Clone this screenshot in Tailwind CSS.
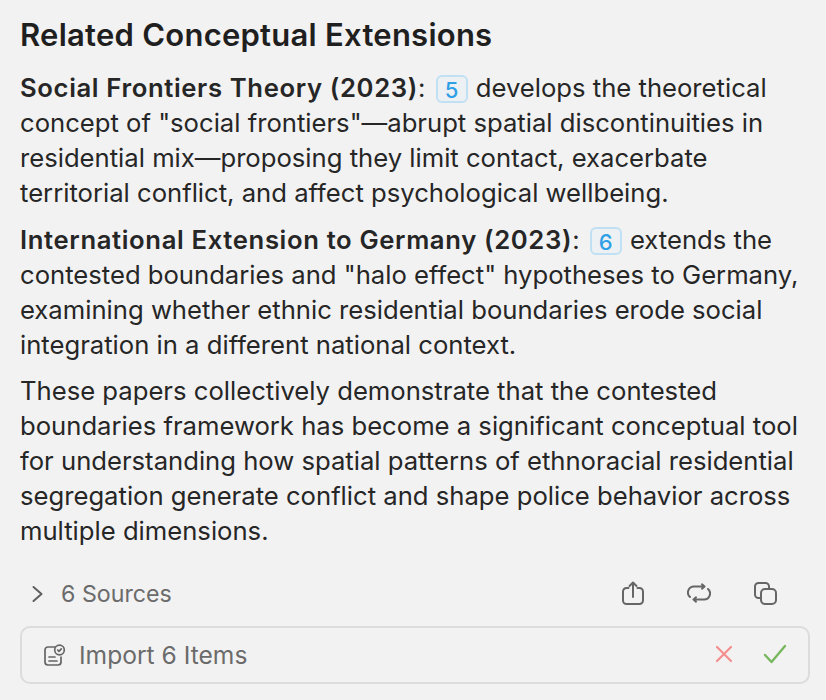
<!DOCTYPE html>
<html lang="en">
<head>
  <meta charset="UTF-8" />
  <title>Related Conceptual Extensions</title>
  <script src="https://cdn.jsdelivr.net/npm/@tailwindcss/browser@4"></script>
</head>
<body class="bg-[#f2f2f2] h-[700px] overflow-hidden font-['Inter',sans-serif] text-[#262626]">
  <div class="pl-[20px] pr-4 pt-[16px]">
    <h1 class="text-[31px] leading-[38px] font-semibold tracking-[0.25px] text-[#1f1f1f]">Related Conceptual Extensions</h1>

    <p class="mt-[17px] text-[25.65px] leading-[34.85px] whitespace-nowrap">
      <b class="font-semibold tracking-[0.64px]">Social Frontiers Theory (2023)</b>:
      <span class="inline-block w-[32px] h-[28px] ml-[3px] mr-[1px] align-[-1px] text-center leading-[27px] text-[22px] font-medium text-[#2f9fe6] bg-[#eef1f3] border-2 border-[#c0e0f4] rounded-[6px]">5</span>
      develops the theoretical<br>concept of "social frontiers"—abrupt spatial discontinuities in<br>residential mix—proposing they limit contact, exacerbate<br>territorial conflict, and affect psychological wellbeing.
    </p>

    <p class="mt-[12.6px] text-[25.65px] leading-[34.85px] whitespace-nowrap">
      <b class="font-semibold tracking-[0.64px]">International Extension to Germany (2023)</b>:
      <span class="inline-block w-[32px] h-[28px] ml-[3px] mr-[1px] align-[-1px] text-center leading-[27px] text-[22px] font-medium text-[#2f9fe6] bg-[#eef1f3] border-2 border-[#c0e0f4] rounded-[6px]">6</span>
      extends the<br>contested boundaries and "halo effect" hypotheses to Germany,<br>examining whether ethnic residential boundaries erode social<br>integration in a different national context.
    </p>

    <p class="mt-[12px] text-[25.65px] leading-[34.85px] whitespace-nowrap">
      These papers collectively demonstrate that the contested<br>boundaries framework has become a significant conceptual tool<br>for understanding how spatial patterns of ethnoracial residential<br>segregation generate conflict and shape police behavior across<br>multiple dimensions.
    </p>
  </div>

  <!-- sources row -->
  <div class="mt-[28.5px] ml-[32px] mr-[49px] flex items-center justify-between h-[34px] text-[#6b6b6b]">
    <div class="flex items-center gap-[17px]">
      <svg width="12" height="18" viewBox="0 0 12 18" fill="none" stroke="#5f5f5f" stroke-width="2" stroke-linecap="round" stroke-linejoin="round"><path d="M1.500 2l8 7-8 7"/></svg>
      <span class="text-[23.2px]">6 Sources</span>
    </div>
    <div class="flex items-center gap-[42px] mb-[3px]">
      <svg width="24" height="24" viewBox="0 0 24 24" fill="none" stroke="#666" stroke-width="2" stroke-linecap="round" stroke-linejoin="round"><path d="M7.500 7H5.500A3.500 3.500 0 0 0 2 10.500V19.500A3.500 3.500 0 0 0 5.500 23H18.500A3.500 3.500 0 0 0 22 19.500V10.500A3.500 3.500 0 0 0 18.500 7H16.500"/><path d="M12 16V2"/><path d="M8.500 5L12 1.500l3.500 3.500"/></svg>
      <svg width="24" height="22" viewBox="0 0 24 22" fill="none" stroke="#666" stroke-width="2" stroke-linecap="round" stroke-linejoin="round"><path d="M3 15A6 6 0 0 1 7 4.500H17M15 2.300l2.500 2.200-2.500 2.200"/><path d="M21 7A6 6 0 0 1 17 17.500H7M9 15.300l-2.500 2.200 2.500 2.200"/></svg>
      <svg width="24" height="24" viewBox="0 0 24 24" fill="none" stroke="#666" stroke-width="2" stroke-linejoin="round"><path d="M7 17H5.500A3.500 3.500 0 0 1 2 13.500V5.500A3.500 3.500 0 0 1 5.500 2H12.500A3.500 3.500 0 0 1 16 5.500V7"/><rect x="8" y="8" width="15" height="15" rx="4"/></svg>
    </div>
  </div>

  <!-- import bar -->
  <div class="mt-[15px] ml-[20px] mr-[16px] h-[58px] flex items-center justify-between border-2 border-[#dcdcdc] rounded-[10px] pl-[21px] pr-[21px]">
    <div class="flex items-center gap-[13px] text-[#6b6b6b]">
      <svg width="23" height="23" viewBox="0 0 23 23" fill="none" stroke="#666" stroke-width="1.700" stroke-linecap="round" stroke-linejoin="round"><path d="M12 3H5A3 3 0 0 0 2 6V18A3 3 0 0 0 5 21H15A3 3 0 0 0 18 18V13"/><circle cx="16.500" cy="6" r="4.800"/><path d="M14.700 6l1.300 1.300 2.300-2.500"/><path d="M6 13H12M6 17H14"/></svg>
      <span class="text-[24.6px]">Import 6 Items</span>
    </div>
    <div class="flex items-center gap-[30px] mb-[3px]">
      <svg width="18" height="18" viewBox="0 0 18 18" fill="none" stroke="#f58f8f" stroke-width="2.200" stroke-linecap="round"><path d="M2 2l14 14M16 2L2 16"/></svg>
      <svg width="24" height="20" viewBox="0 0 24 20" fill="none" stroke="#77b85e" stroke-width="2.400" stroke-linecap="round" stroke-linejoin="round"><path d="M2 11l6.500 7L22 2"/></svg>
    </div>
  </div>
</body>
</html>
